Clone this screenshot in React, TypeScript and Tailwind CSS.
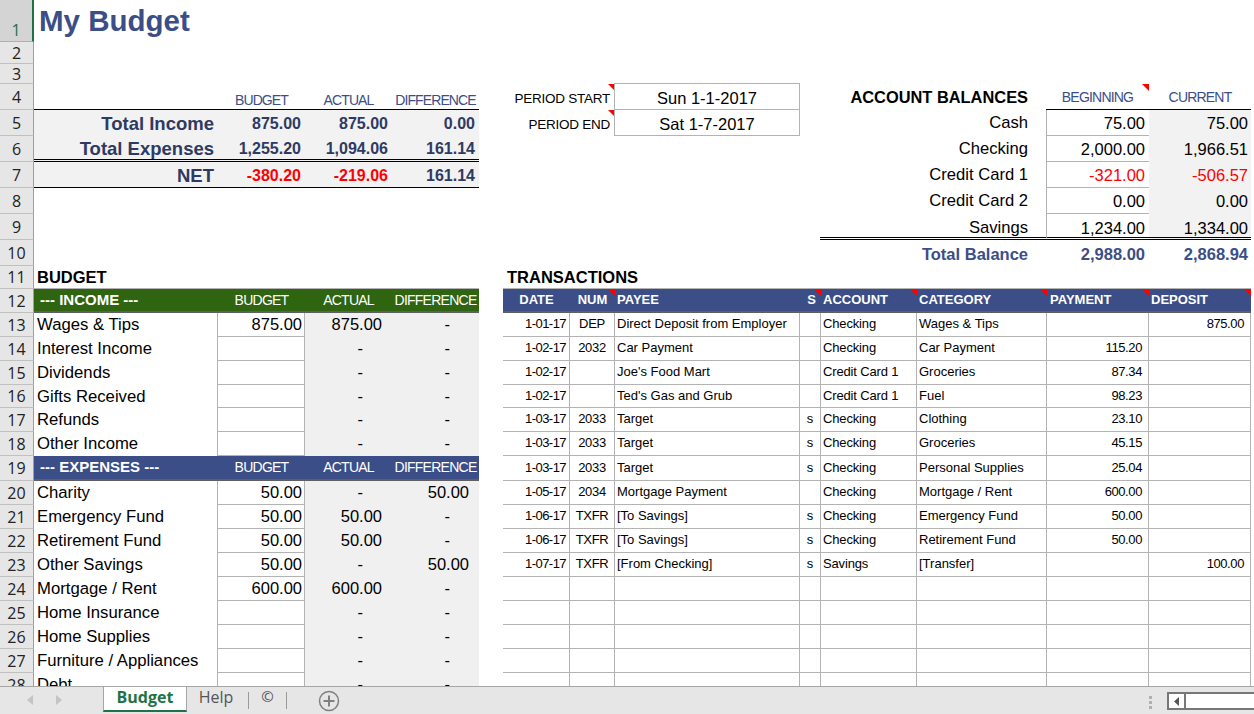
import { Fragment } from 'react';

type C = { t?: string; c?: string; tri?: boolean };

const LINE = 'border-[#b3b3b3]';
const heights = [42, 22, 20, 26, 26, 26, 26, 26, 26, 26, 23, 24, 24, 24, 24, 23, 24, 24, 25, 24, 24, 24, 24, 24, 24, 24, 24, 24];

const Cell = ({ t, c = '', tri }: C) => (
  <div className={`relative flex overflow-hidden whitespace-nowrap ${c}`}>
    {t}
    {tri && <span className="absolute right-0 top-0 border-l-[7px] border-t-[7px] border-l-transparent border-t-[#ff0000]" />}
  </div>
);

const blanks = (n: number): C[] => Array.from({ length: n }, () => ({}));

// summary block, rows 5-7
const sumCell = 'items-center justify-end pr-[4px] pt-[2px] text-[16px] font-bold text-[#2e3a63] bg-[#f2f2f2]';
const summary = (label: string, b: string, a: string, d: string, neg: boolean, extra: string): C[] => [
  { t: label, c: `items-center justify-end pr-[4px] pt-[2px] text-[18.5px] font-bold text-[#2e3a63] bg-[#f2f2f2] ${extra}` },
  { t: b, c: `${neg ? sumCell + ' !text-[#ff0000]' : sumCell} ${extra}` },
  { t: a, c: `${neg ? sumCell + ' !text-[#ff0000]' : sumCell} ${extra}` },
  { t: d, c: `${sumCell} ${extra}` },
];

const topHead = 'items-center justify-center pt-[8px] text-[14px] tracking-[-0.9px] text-[#3b4e87]';
const acctHead = 'items-center justify-center pt-[2px] text-[14px] tracking-[-0.8px] text-[#3b4e87]';
const bandHead = 'items-center justify-center text-[14px] tracking-[-0.75px] text-white';

const band = (title: string, color: string): C[] => [
  { t: title, c: `items-center pl-[6px] text-[15px] font-bold text-white ${color}` },
  { t: 'BUDGET', c: `${bandHead} ${color}` },
  { t: 'ACTUAL', c: `${bandHead} ${color}` },
  { t: 'DIFFERENCE', c: `${bandHead} ${color}` },
];

// budget list body
const budgetRow = (label: string, b = '', a = '-', d = '-'): C[] => [
  { t: label, c: `items-center pl-[3px] text-[16.7px] text-black border-r ${LINE}` },
  { t: b, c: `items-center justify-end pr-[2px] text-[16.5px] text-black border-r border-b ${LINE}` },
  { t: a, c: `items-center justify-end text-[16.5px] text-black bg-[#f0f0f0] border-b border-transparent ${a === '-' ? 'pr-[29px]' : 'pr-[10px]'}` },
  { t: d, c: `items-center justify-end text-[16.5px] text-black bg-[#f0f0f0] border-b border-transparent ${d === '-' ? 'pr-[29px]' : 'pr-[10px]'}` },
];

// period + account balances, rows 4-10
const periodRow = (label: string, value: string, top: boolean): C[] => [
  { t: label, c: 'col-span-2 items-center justify-end pr-[5px] pt-[5px] text-[13.5px] tracking-[-0.25px] text-black', tri: true },
  { t: value, c: `-ml-px items-center justify-center pt-[3px] text-[16.5px] text-black border-b border-r border-l ${LINE} ${top ? '-mt-px border-t' : ''}` },
  {},
];
const noPeriod: C[] = [{ c: 'col-span-2' }, {}, {}];

const acct = (label: string, b: string, a: string, neg = false, last = false): C[] => [
  { t: label, c: `col-span-2 items-center justify-end pr-[19px] text-[16.6px] text-black ${last ? '-ml-px pt-[5px] border-b-[3px] border-double border-black' : 'pt-[2px] border-b border-transparent'}` },
  { t: b, c: `-ml-px items-center justify-end pr-[4px] text-[16.5px] border-l ${LINE} ${neg ? 'text-[#ff0000]' : 'text-black'} ${last ? 'pt-[5px] border-b-[3px] border-double !border-b-black' : 'pt-[2px] border-b'}` },
  { t: a, c: `items-center justify-end pr-[3px] text-[16.5px] bg-[#f2f2f2] ${neg ? 'text-[#ff0000]' : 'text-black'} ${last ? 'pt-[5px] border-b-[3px] border-double border-black' : 'pt-[2px] border-b border-transparent'}` },
  {},
];

// transaction table
const txHead = 'items-center text-[13px] font-bold text-white bg-[#3b4e87]';
const txCell = `items-center pb-[1px] text-[13px] text-black border-r border-b ${LINE}`;
const tx = (date = '', num = '', payee = '', s = '', account = '', category = '', pay = '', dep = ''): C[] => [
  { t: date, c: `${txCell} justify-end pr-[3px] tracking-[-0.55px]` },
  { t: num, c: `${txCell} justify-center tracking-[-0.3px]` },
  { t: payee, c: `${txCell} pl-[2px]` },
  { t: s, c: `${txCell} justify-center` },
  { t: account, c: `${txCell} pl-[2px] tracking-[-0.15px]` },
  { t: category, c: `${txCell} pl-[2px]` },
  { t: pay, c: `${txCell} justify-end pr-[6px] tracking-[-0.4px]` },
  { t: dep, c: `${txCell} justify-end pr-[6px] tracking-[-0.4px]` },
  {},
];
const txHeader = (): C[] => [
  { t: 'DATE', c: `${txHead} justify-center` },
  { t: 'NUM', c: `${txHead} justify-center`, tri: true },
  { t: 'PAYEE', c: `${txHead} pl-[2px]` },
  { t: 'S', c: `${txHead} justify-end pr-[5px]`, tri: true },
  { t: 'ACCOUNT', c: `${txHead} pl-[2px]`, tri: true },
  { t: 'CATEGORY', c: `${txHead} pl-[2px]`, tri: true },
  { t: 'PAYMENT', c: `${txHead} pl-[3px]`, tri: true },
  { t: 'DEPOSIT', c: `${txHead} pl-[2px]`, tri: true },
  {},
];

const title = 'items-center text-[16.5px] font-bold text-black';

const rows: C[][] = [
  [{ t: 'My Budget', c: 'items-start pl-[5px] pt-[3px] text-[29.5px] leading-[36px] font-bold text-[#3b4e87]' }, ...blanks(13)],
  blanks(14),
  blanks(14),
  [
    { c: 'border-b border-black' },
    { t: 'BUDGET', c: `${topHead} border-b border-black` },
    { t: 'ACTUAL', c: `${topHead} border-b border-black` },
    { t: 'DIFFERENCE', c: `${topHead} border-b border-black` },
    {},
    ...periodRow('PERIOD START', 'Sun 1-1-2017', true),
    { t: 'ACCOUNT BALANCES', c: 'col-span-2 items-center justify-end pr-[19px] text-[16.4px] font-bold text-black' },
    { t: 'BEGINNING', c: `${acctHead} -ml-px border-b border-black`, tri: true },
    { t: 'CURRENT', c: `${acctHead} border-b border-black` },
    {},
  ],
  [...summary('Total Income', '875.00', '875.00', '0.00', false, ''), {}, ...periodRow('PERIOD END', 'Sat 1-7-2017', false), ...acct('Cash', '75.00', '75.00')],
  [...summary('Total Expenses', '1,255.20', '1,094.06', '161.14', false, 'border-b-[3px] border-double border-black'), {}, ...noPeriod, ...acct('Checking', '2,000.00', '1,966.51')],
  [...summary('NET', '-380.20', '-219.06', '161.14', true, 'border-b border-black'), {}, ...noPeriod, ...acct('Credit Card 1', '-321.00', '-506.57', true)],
  [...blanks(5), ...noPeriod, ...acct('Credit Card 2', '0.00', '0.00')],
  [...blanks(5), ...noPeriod, ...acct('Savings', '1,234.00', '1,334.00', false, true)],
  [
    ...blanks(5),
    ...noPeriod,
    { t: 'Total Balance', c: 'col-span-2 items-center justify-end pr-[19px] pt-[2px] text-[16.5px] font-bold text-[#3b4e87]' },
    { t: '2,988.00', c: 'items-center justify-end pr-[4px] pt-[2px] text-[16.5px] font-bold text-[#3b4e87]' },
    { t: '2,868.94', c: 'items-center justify-end pr-[3px] pt-[2px] text-[16.5px] font-bold text-[#3b4e87]' },
    {},
  ],
  [
    { t: 'BUDGET', c: `${title} pl-[3px] border-b ${LINE}` },
    { c: `border-b ${LINE}` },
    { c: `border-b ${LINE}` },
    { c: `border-b ${LINE}` },
    {},
    { t: 'TRANSACTIONS', c: `${title} col-span-3 pl-[4px] border-b ${LINE}` },
    ...Array.from({ length: 5 }, () => ({ c: `border-b ${LINE}` })),
    {},
  ],
  [...band('--- INCOME ---', 'bg-[#2f6411] border-b-2 border-[#5f5f5f]'), {}, ...txHeader().map((h, i) => (i < 8 ? { ...h, c: `${h.c} border-b-2 border-[#5f5f5f]` } : h))],
  [...budgetRow('Wages & Tips', '875.00', '875.00'), {}, ...tx('1-01-17', 'DEP', 'Direct Deposit from Employer', '', 'Checking', 'Wages & Tips', '', '875.00')],
  [...budgetRow('Interest Income'), {}, ...tx('1-02-17', '2032', 'Car Payment', '', 'Checking', 'Car Payment', '115.20')],
  [...budgetRow('Dividends'), {}, ...tx('1-02-17', '', "Joe's Food Mart", '', 'Credit Card 1', 'Groceries', '87.34')],
  [...budgetRow('Gifts Received'), {}, ...tx('1-02-17', '', "Ted's Gas and Grub", '', 'Credit Card 1', 'Fuel', '98.23')],
  [...budgetRow('Refunds'), {}, ...tx('1-03-17', '2033', 'Target', 's', 'Checking', 'Clothing', '23.10')],
  [...budgetRow('Other Income'), {}, ...tx('1-03-17', '2033', 'Target', 's', 'Checking', 'Groceries', '45.15')],
  [...band('--- EXPENSES ---', 'bg-[#3b4e87] border-b-2 border-[#5f5f5f]'), {}, ...tx('1-03-17', '2033', 'Target', 's', 'Checking', 'Personal Supplies', '25.04')],
  [...budgetRow('Charity', '50.00', '-', '50.00'), {}, ...tx('1-05-17', '2034', 'Mortgage Payment', '', 'Checking', 'Mortgage / Rent', '600.00')],
  [...budgetRow('Emergency Fund', '50.00', '50.00'), {}, ...tx('1-06-17', 'TXFR', '[To Savings]', 's', 'Checking', 'Emergency Fund', '50.00')],
  [...budgetRow('Retirement Fund', '50.00', '50.00'), {}, ...tx('1-06-17', 'TXFR', '[To Savings]', 's', 'Checking', 'Retirement Fund', '50.00')],
  [...budgetRow('Other Savings', '50.00', '-', '50.00'), {}, ...tx('1-07-17', 'TXFR', '[From Checking]', 's', 'Savings', '[Transfer]', '', '100.00')],
  [...budgetRow('Mortgage / Rent', '600.00', '600.00'), {}, ...tx()],
  [...budgetRow('Home Insurance'), {}, ...tx()],
  [...budgetRow('Home Supplies'), {}, ...tx()],
  [...budgetRow('Furniture / Appliances'), {}, ...tx()],
  [...budgetRow('Debt'), {}, ...tx()],
];

function SheetTabs() {
  return (
    <div className="flex h-[28px] items-start border-t border-[#a6a6a6] bg-[#e6e6e6] font-['Open_Sans',sans-serif]">
      <div className="flex w-[103px] items-center pl-[27px] pt-[8px] text-[#c4c4c4]">
        <svg width="6" height="10" viewBox="0 0 6 10" className="fill-current"><path d="M6 0v10L0 5z" /></svg>
        <svg width="6" height="10" viewBox="0 0 6 10" className="ml-[23px] fill-current"><path d="M0 0v10l6-5z" /></svg>
      </div>
      <div className="flex h-[25px] w-[84px] items-center justify-center border-x border-[#a6a6a6] border-b-2 border-b-[#217346] bg-white pb-[3px] text-[16px] font-bold text-[#217346]">Budget</div>
      <div className="flex h-[20px] w-[61px] items-center justify-center pr-[3px] text-[16px] text-[#555]">Help</div>
      <div className="mt-[5px] h-[17px] w-px bg-[#9a9a9a]" />
      <div className="flex h-[19px] w-[37px] items-center justify-center text-[15px] text-[#555]">©</div>
      <div className="mt-[5px] h-[17px] w-px bg-[#9a9a9a]" />
      <svg width="22" height="22" viewBox="0 0 22 22" className="ml-[31px] mt-[3px] text-[#808080]" fill="none" stroke="currentColor">
        <circle cx="11" cy="11" r="9.5" strokeWidth="1.5" />
        <path d="M11 5.5v11M5.5 11h11" strokeWidth="2" />
      </svg>
      <div className="ml-auto flex items-center">
        <div className="mr-[15px] mt-[7px] flex flex-col gap-[2px]">
          <span className="h-[3px] w-[3px] bg-[#b0b0b0]" />
          <span className="h-[3px] w-[3px] bg-[#b0b0b0]" />
          <span className="h-[3px] w-[3px] bg-[#b0b0b0]" />
        </div>
        <div className="mt-[5px] flex h-[18px] w-[87px] border-y-2 border-l-2 border-[#777] bg-white">
          <div className="flex w-[17px] items-center justify-center border-r-2 border-[#777]">
            <svg width="5" height="9" viewBox="0 0 5 9" className="fill-[#555]"><path d="M5 0v9L0 4.5z" /></svg>
          </div>
        </div>
      </div>
    </div>
  );
}

export default function App() {
  return (
    <div className="flex h-[714px] w-[1254px] flex-col overflow-hidden bg-white font-['Liberation_Sans',Arial,sans-serif]">
      <div className="h-[686px] overflow-hidden">
        <div
          className="grid grid-cols-[34px_184px_87px_87px_87px_24px_67px_45px_185px_21px_96px_130px_102px_102px_3px]"
          style={{ gridTemplateRows: heights.map((h) => `${h}px`).join(' ') }}
        >
          {rows.map((cells, i) => (
            <Fragment key={i}>
              <div
                className={
                  i === 0
                    ? "flex items-end justify-center border-r-2 border-b border-r-[#217346] border-b-[#b0b0b0] bg-[#d4d4d4] font-['Open_Sans',sans-serif] text-[16px] leading-[22px] text-[#217346]"
                    : "flex items-center justify-center border-r border-b border-r-[#9f9f9f] border-b-[#c0c0c0] bg-[#e6e6e6] font-['Open_Sans',sans-serif] text-[16px] text-[#222]"
                }
              >
                {i + 1}
              </div>
              {cells.map((cell, j) => (
                <Cell key={j} {...cell} />
              ))}
            </Fragment>
          ))}
        </div>
      </div>
      <SheetTabs />
    </div>
  );
}
